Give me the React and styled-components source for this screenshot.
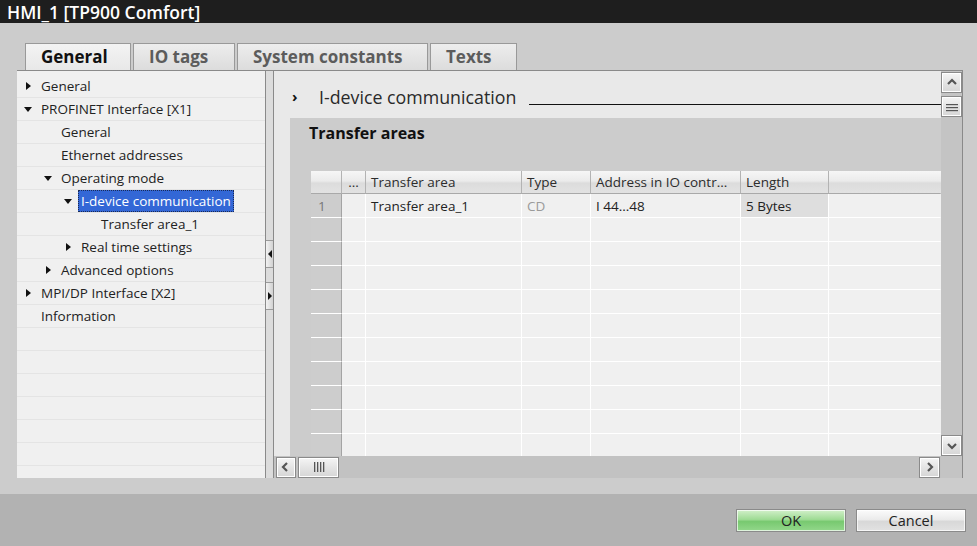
import React from 'react'
import styled, { createGlobalStyle } from 'styled-components'

const GlobalStyle = createGlobalStyle`
  html, body { margin:0; padding:0; }
  body {
    font-family: "Open Sans", "Liberation Sans", sans-serif;
    font-size:13.5px;
    color:#222;
    background:#cccccc;
  }
  * { box-sizing:border-box; }
`

const Window = styled.div`
    width:977px;
    height:546px;
    display:flex;
    flex-direction:column;
    overflow:hidden;
    background:#cccccc;
`
const TitleBar = styled.div`
    height:23px;
    flex-shrink:0;
    background:#1e1e1e;
    color:#fff;
    font-size:17.5px;
    font-weight:600;
    padding-left:7px;
    display:flex;
    align-items:center;
`
const Body = styled.div`
    flex:1;
    min-height:0;
    display:flex;
    flex-direction:column;
    padding:20px 14px 16px 17px;
`
const TabRow = styled.div`
    display:flex;
    gap:2px;
    padding-left:8px;
    height:27px;
    flex-shrink:0;
`
const Tab = styled.div`
    width:${p => p.$w}px;
    border:1px solid #999;
    border-bottom:none;
    display:flex;
    align-items:center;
    padding:0 0 2px 15px;
    font-size:17px;
    font-weight:700;
    white-space:nowrap;
    color:${p => p.$active ? '#111' : '#5c5c5c'};
    background:${p => p.$active ? 'linear-gradient(#f3f3f3,#e8e8e8)' : 'linear-gradient(#ededed,#dcdcdc)'};
`
const Panel = styled.div`
    flex:1;
    min-height:0;
    display:flex;
    border-top:1px solid #8a8a8a;
    border-right:1px solid #8a8a8a;
`
const Tree = styled.div`
    width:248px;
    flex-shrink:0;
    background:#f0f0f0;
    padding-top:4px;
    overflow:hidden;
`
const TreeRow = styled.div`
    height:23px;
    display:flex;
    align-items:center;
    padding-left:${p => 4 + p.$level * 20}px;
    border-bottom:1px solid #e4e4e4;
    white-space:nowrap;
`
const ArrowSlot = styled.span`
    width:14px;
    display:flex;
    justify-content:center;
    align-items:center;
    margin-right:3px;
    flex-shrink:0;
`
const ArrowRight = styled.span`
    width:0;
    height:0;
    border-left:5px solid #111;
    border-top:4px solid transparent;
    border-bottom:4px solid transparent;
`
const ArrowDown = styled.span`
    width:0;
    height:0;
    border-top:5px solid #111;
    border-left:4.5px solid transparent;
    border-right:4.5px solid transparent;
`
const TreeLabel = styled.span`
    padding:0 2px;
    height:22px;
    display:flex;
    align-items:center;
    color:${p => p.$sel ? '#fff' : '#222'};
    background:${p => p.$sel ? '#3367d6' : 'transparent'};
    border:1px dotted ${p => p.$sel ? '#1a2a55' : 'transparent'};
`
const Splitter = styled.div`
    width:9px;
    flex-shrink:0;
    background:#dcdcdc;
    border-left:1px solid #8a8a8a;
    border-right:1px solid #8a8a8a;
    display:flex;
    flex-direction:column;
    justify-content:center;
    gap:14px;
`
const SplitButton = styled.div`
    height:28px;
    background:linear-gradient(90deg,#f2f2f2,#d2d2d2);
    border-top:1px solid #9a9a9a;
    border-bottom:1px solid #9a9a9a;
    display:flex;
    align-items:center;
    justify-content:center;
`
const TinyLeft = styled.span`
    width:0;height:0;
    border-right:4px solid #111;
    border-top:4px solid transparent;
    border-bottom:4px solid transparent;
`
const TinyRight = styled.span`
    width:0;height:0;
    border-left:4px solid #111;
    border-top:4px solid transparent;
    border-bottom:4px solid transparent;
`
const Content = styled.div`
    flex:1;
    min-width:0;
    display:flex;
    flex-direction:column;
`
const TopRow = styled.div`
    flex:1;
    min-height:0;
    display:flex;
`
const ScrollView = styled.div`
    flex:1;
    min-width:0;
    background:#e9e9e9;
    display:flex;
    flex-direction:column;
    overflow:hidden;
`
const Header = styled.div`
    height:47px;
    flex-shrink:0;
    display:flex;
    align-items:center;
    padding:4px 0 0 18px;
`
const Chevron = styled.span`
    width:27px;
    font-size:15px;
    font-weight:700;
    color:#111;
    margin-top:-1px;
`
const HeaderText = styled.span`
    font-size:17.8px;
    color:#2a2a2a;
    white-space:nowrap;
`
const HeaderLine = styled.span`
    flex:1;
    height:1px;
    background:#111;
    margin-left:13px;
    margin-top:16px;
`
const Section = styled.div`
    flex:1;
    min-height:0;
    margin-left:16px;
    background:#cccccc;
    display:flex;
    flex-direction:column;
    overflow:hidden;
`
const SectionTitle = styled.div`
    height:30px;
    flex-shrink:0;
    display:flex;
    align-items:center;
    padding-left:19px;
    font-size:16px;
    font-weight:700;
    color:#111;
    margin-bottom:23px;
`
const Table = styled.div`
    margin-left:21px;
    display:grid;
    grid-template-columns:31px 24px 156px 69px 150px 88px 1fr;
    grid-template-rows:23px;
    grid-auto-rows:24px;
`
const HeadCell = styled.div`
    background:linear-gradient(#f6f6f6,#ebebeb 45%,#dcdcdc 55%,#e2e2e2);
    border-right:1px solid ${p => p.$last ? 'transparent' : '#b3b3b3'};
    border-bottom:1px solid #a9a9a9;
    display:flex;
    align-items:center;
    justify-content:${p => p.$center ? 'center' : 'flex-start'};
    padding-left:${p => p.$center ? 0 : 5}px;
    color:#2c2c2c;
    white-space:nowrap;
    overflow:hidden;
`
const RowHead = styled.div`
    background:#cdcdcd;
    border-bottom:1px solid #fff;
    border-right:1px solid #a4a4a4;
    display:flex;
    align-items:center;
    padding-left:7px;
    color:#777;
`
const Cell = styled.div`
    background:${p => p.$shade ? '#dedede' : '#f0f0f0'};
    border-bottom:1px solid #fff;
    border-right:1px solid ${p => p.$last ? 'transparent' : '#fff'};
    display:flex;
    align-items:center;
    padding-left:5px;
    color:${p => p.$muted ? '#9a9a9a' : '#222'};
    white-space:nowrap;
    overflow:hidden;
`
const VScroll = styled.div`
    width:21px;
    flex-shrink:0;
    background:#c4c4c4;
    display:flex;
    flex-direction:column;
    padding-top:1px;
    gap:3px;
`
const Spacer = styled.div`
    flex:1;
`
const ScrollButton = styled.div`
    width:${p => p.$w || 21}px;
    height:21px;
    flex-shrink:0;
    border:1px solid #8a8a8a;
    box-shadow:inset 0 0 0 1px #fff;
    background:linear-gradient(#f5f5f5,#e4e4e4 50%,#d6d6d6);
    display:flex;
    align-items:center;
    justify-content:center;
`
const HRow = styled.div`
    height:22px;
    flex-shrink:0;
    display:flex;
`
const HScroll = styled.div`
    flex:1;
    background:#c2c2c2;
    display:flex;
    align-items:center;
    padding:0 1px 0 2px;
    gap:2px;
`
const Corner = styled.div`
    width:21px;
    background:#c4c4c4;
`
const Footer = styled.div`
    height:52px;
    flex-shrink:0;
    background:#b2b2b2;
    display:flex;
    justify-content:flex-end;
    align-items:flex-start;
    padding:15px 11px 0 0;
    gap:10px;
`
const DialogButton = styled.div`
    width:110px;
    height:23px;
    border:1px solid #8a8a8a;
    display:flex;
    align-items:center;
    justify-content:center;
    font-size:14.5px;
    color:#222;
    background:${p => p.$primary
        ? 'linear-gradient(#d2f0ca,#9edb94 45%,#78c970 55%,#93d78b)'
        : 'linear-gradient(#fbfbfb,#ebebeb 45%,#d8d8d8 55%,#e2e2e2)'};
    box-shadow:inset 0 0 0 1px rgba(255,255,255,0.7);
`

const Chev = ({ dir }) => {
    const pts = {
        up: '5,10 9,6 13,10',
        down: '5,7 9,11 13,7',
        left: '10,5 6,9 10,13',
        right: '7,5 11,9 7,13',
    }[dir]
    return (
        <svg width="18" height="18" viewBox="0 0 18 18">
            <polyline points={pts} fill="none" stroke="#555" strokeWidth="2.2" />
        </svg>
    )
}

const Bars = ({ vertical }) => (
    <svg width="14" height="12" viewBox="0 0 14 12">
        {vertical
            ? [2, 5, 8, 11].map(x => <rect key={x} x={x} y="1" width="1.3" height="10" fill="#555" />)
            : [3, 6, 9].map(y => <rect key={y} x="1" y={y} width="12" height="1.2" fill="#555" />)}
    </svg>
)

const tabs = [
    { t: 'General', w: 106, active: true },
    { t: 'IO tags', w: 102 },
    { t: 'System constants', w: 191 },
    { t: 'Texts', w: 87 },
]

const tree = [
    { l: 0, a: 'r', t: 'General' },
    { l: 0, a: 'd', t: 'PROFINET Interface [X1]' },
    { l: 1, t: 'General' },
    { l: 1, t: 'Ethernet addresses' },
    { l: 1, a: 'd', t: 'Operating mode' },
    { l: 2, a: 'd', t: 'I-device communication', sel: true },
    { l: 3, t: 'Transfer area_1' },
    { l: 2, a: 'r', t: 'Real time settings' },
    { l: 1, a: 'r', t: 'Advanced options' },
    { l: 0, a: 'r', t: 'MPI/DP Interface [X2]' },
    { l: 0, t: 'Information' },
    { l: 0, t: '' }, { l: 0, t: '' }, { l: 0, t: '' }, { l: 0, t: '' },
    { l: 0, t: '' }, { l: 0, t: '' }, { l: 0, t: '' },
]

const emptyRows = Array.from({ length: 10 })

export default function App() {
    return (
        <Window>
            <GlobalStyle />
            <TitleBar>HMI_1 [TP900 Comfort]</TitleBar>
            <Body>
                <TabRow>
                    {tabs.map(tab => (
                        <Tab key={tab.t} $w={tab.w} $active={tab.active}>{tab.t}</Tab>
                    ))}
                </TabRow>
                <Panel>
                    <Tree>
                        {tree.map((r, i) => (
                            <TreeRow key={i} $level={r.l}>
                                <ArrowSlot>
                                    {r.a === 'r' && <ArrowRight />}
                                    {r.a === 'd' && <ArrowDown />}
                                </ArrowSlot>
                                {r.t && <TreeLabel $sel={r.sel}>{r.t}</TreeLabel>}
                            </TreeRow>
                        ))}
                    </Tree>
                    <Splitter>
                        <SplitButton><TinyLeft /></SplitButton>
                        <SplitButton><TinyRight /></SplitButton>
                    </Splitter>
                    <Content>
                        <TopRow>
                            <ScrollView>
                                <Header>
                                    <Chevron>›</Chevron>
                                    <HeaderText>I-device communication</HeaderText>
                                    <HeaderLine />
                                </Header>
                                <Section>
                                    <SectionTitle>Transfer areas</SectionTitle>
                                    <Table>
                                        <HeadCell />
                                        <HeadCell $center>...</HeadCell>
                                        <HeadCell>Transfer area</HeadCell>
                                        <HeadCell>Type</HeadCell>
                                        <HeadCell>Address in IO contr...</HeadCell>
                                        <HeadCell>Length</HeadCell>
                                        <HeadCell $last />

                                        <RowHead>1</RowHead>
                                        <Cell />
                                        <Cell>Transfer area_1</Cell>
                                        <Cell $muted>CD</Cell>
                                        <Cell>I 44...48</Cell>
                                        <Cell $shade>5 Bytes</Cell>
                                        <Cell $last />

                                        {emptyRows.map((_, i) => (
                                            <React.Fragment key={i}>
                                                <RowHead />
                                                <Cell />
                                                <Cell />
                                                <Cell />
                                                <Cell />
                                                <Cell />
                                                <Cell $last />
                                            </React.Fragment>
                                        ))}
                                    </Table>
                                </Section>
                            </ScrollView>
                            <VScroll>
                                <ScrollButton><Chev dir="up" /></ScrollButton>
                                <ScrollButton><Bars /></ScrollButton>
                                <Spacer />
                                <ScrollButton><Chev dir="down" /></ScrollButton>
                            </VScroll>
                        </TopRow>
                        <HRow>
                            <HScroll>
                                <ScrollButton $w={20}><Chev dir="left" /></ScrollButton>
                                <ScrollButton $w={41}><Bars vertical /></ScrollButton>
                                <Spacer />
                                <ScrollButton><Chev dir="right" /></ScrollButton>
                            </HScroll>
                            <Corner />
                        </HRow>
                    </Content>
                </Panel>
            </Body>
            <Footer>
                <DialogButton $primary>OK</DialogButton>
                <DialogButton>Cancel</DialogButton>
            </Footer>
        </Window>
    )
}
